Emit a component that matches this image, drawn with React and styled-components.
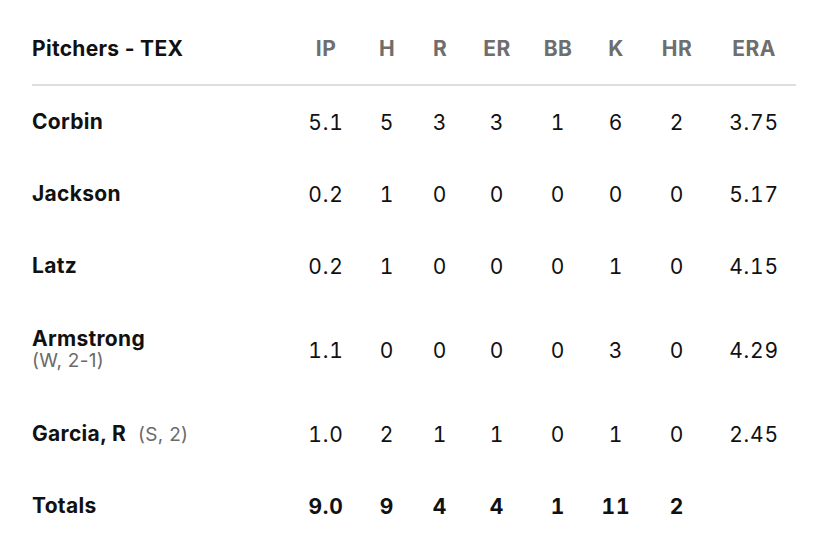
import React from 'react'
import styled, { createGlobalStyle } from 'styled-components'

const GlobalStyle = createGlobalStyle`
  html, body {
    margin: 0;
    padding: 0;
    background: #fff;
  }
  body {
    font-family: Inter, "Open Sans", Arial, sans-serif;
    color: #111;
  }
`

const COLUMNS = ['IP', 'H', 'R', 'ER', 'BB', 'K', 'HR', 'ERA']

const pitchers = [
  { name: 'Corbin', stats: ['5.1', '5', '3', '3', '1', '6', '2', '3.75'] },
  { name: 'Jackson', stats: ['0.2', '1', '0', '0', '0', '0', '0', '5.17'] },
  { name: 'Latz', stats: ['0.2', '1', '0', '0', '0', '1', '0', '4.15'] },
  { name: 'Armstrong', note: '(W, 2-1)', stacked: true, stats: ['1.1', '0', '0', '0', '0', '3', '0', '4.29'] },
  { name: 'Garcia, R', note: '(S, 2)', stats: ['1.0', '2', '1', '1', '0', '1', '0', '2.45'] },
]

const totals = ['9.0', '9', '4', '4', '1', '11', '2', '']

export default function App() {
  return (
    <>
      <GlobalStyle />
      <Wrapper>
        <HeaderRow>
          <TeamTitle>Pitchers - TEX</TeamTitle>
          {COLUMNS.map((c) => (
            <HeadCell key={c}>{c}</HeadCell>
          ))}
        </HeaderRow>
        {pitchers.map((p) => (
          <Row key={p.name} $tall={p.stacked}>
            <NameCell $stacked={p.stacked}>
              <Name>{p.name}</Name>
              {p.note && <Note>{p.note}</Note>}
            </NameCell>
            {p.stats.map((s, i) => (
              <Cell key={i}>{s}</Cell>
            ))}
          </Row>
        ))}
        <Row>
          <NameCell>
            <Name>Totals</Name>
          </NameCell>
          {totals.map((s, i) => (
            <Cell key={i} $bold>
              {s}
            </Cell>
          ))}
        </Row>
      </Wrapper>
    </>
  )
}

const grid = `
  display: grid;
  grid-template-columns: 1fr 60px 62px 44px 70px 52px 64px 58px 90px;
  align-items: center;
  & > *:last-child {
    padding-left: 6px;
  }
`

const Wrapper = styled.div`
  padding: 0 32px;
  width: 764px;
`

const HeaderRow = styled.div`
  ${grid}
  height: 86px;
  padding-top: 12px;
  box-sizing: border-box;
  border-bottom: 2px solid #dedede;

  & > *:first-child {
    padding-left: 0;
  }
`

const TeamTitle = styled.div`
  font-size: 21px;
  font-weight: 700;
  letter-spacing: 0.3px;
  color: #111;
`

const HeadCell = styled.div`
  text-align: center;
  font-size: 21px;
  font-weight: 700;
  letter-spacing: 0.4px;
  color: #6e6e6e;
`

const Row = styled.div`
  ${grid}
  height: ${(p) => (p.$tall ? '96px' : '72px')};
`

const NameCell = styled.div`
  display: flex;
  flex-direction: ${(p) => (p.$stacked ? 'column' : 'row')};
  align-items: ${(p) => (p.$stacked ? 'flex-start' : 'baseline')};
  gap: ${(p) => (p.$stacked ? '0' : '12px')};
`

const Name = styled.span`
  font-size: 21px;
  font-weight: 700;
  letter-spacing: 0.3px;
  color: #111;
  line-height: 22px;
`

const Note = styled.span`
  font-size: 19px;
  letter-spacing: 0.3px;
  color: #6a6a6a;
  line-height: 22px;
`

const Cell = styled.div`
  text-align: center;
  font-size: 21px;
  font-weight: ${(p) => (p.$bold ? 700 : 400)};
  font-variant-numeric: tabular-nums;
  letter-spacing: 0.8px;
  color: #111;
`
